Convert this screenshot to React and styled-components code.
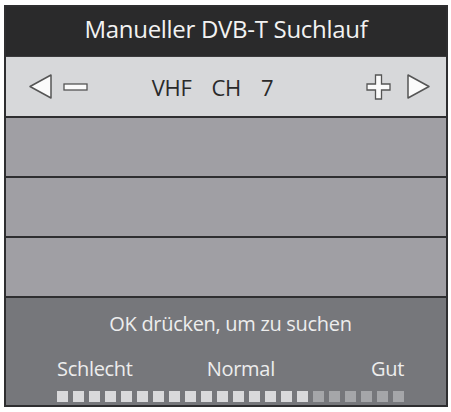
import React from "react";
import styled, { createGlobalStyle } from "styled-components";

const GlobalStyle = createGlobalStyle`
  html, body {
    margin: 0;
    padding: 0;
    background: #ffffff;
  }
  body {
    font-family: "Open Sans", "Noto Sans", sans-serif;
  }
`;

const Page = styled.div`
  width: 451px;
  height: 412px;
  padding: 5px 3px 5px 4px;
  box-sizing: border-box;
`;

const Frame = styled.div`
  display: flex;
  flex-direction: column;
  height: 402px;
  border: 2px solid #2e2e30;
  box-sizing: border-box;
`;

const Header = styled.div`
  height: 50px;
  box-sizing: border-box;
  padding-bottom: 7px;
  background: #2a2a2b;
  color: #f2f2f2;
  display: flex;
  align-items: center;
  justify-content: center;
  font-size: 24px;
  letter-spacing: -0.3px;
  border-bottom: 1px solid #3a3a3c;
`;

const ChannelBar = styled.div`
  height: 59px;
  background: #d7d8da;
  display: flex;
  align-items: center;
  padding: 0 15px 0 22px;
  color: #2a2a2a;
`;

const Side = styled.div`
  display: flex;
  align-items: center;
  gap: ${(p) => p.$gap}px;
  width: 70px;
  justify-content: ${(p) => (p.$right ? "flex-end" : "flex-start")};
`;

const Channel = styled.div`
  flex: 1;
  display: flex;
  justify-content: center;
  gap: 20px;
  font-size: 22px;
  letter-spacing: -0.3px;
  padding-right: 34px;
`;

const Row = styled.div`
  height: 58px;
  background: #a09fa4;
  border-top: 2px solid #2e2e30;
`;

const Footer = styled.div`
  flex: 1;
  background: #76777b;
  border-top: 2px solid #2e2e30;
  color: #ededed;
  display: flex;
  flex-direction: column;
  align-items: center;
  padding: 14px 42px 0 51px;
  font-size: 20px;
  line-height: 24px;
  letter-spacing: -0.3px;
`;

const Hint = styled.div``;

const Scale = styled.div`
  align-self: stretch;
  display: flex;
  justify-content: space-between;
  margin-top: 21px;
`;

const Label = styled.span`
  margin-right: ${(p) => p.$shift || 0}px;
`;

const Meter = styled.div`
  align-self: stretch;
  display: flex;
  gap: 5px;
  margin-top: 10px;
`;

const Cell = styled.div`
  width: 11px;
  height: 11px;
  background: ${(p) => (p.$on ? "#d9d9db" : "#a5a6a9")};
`;

const Arrow = ({ dir }) => (
  <svg width="25" height="27" viewBox="0 0 25 27">
    {dir === "left" ? (
      <polygon points="23,2 23,25 2,13.5" fill="#fbfbfb" stroke="#555" strokeWidth="1.5" strokeLinejoin="round" />
    ) : (
      <polygon points="2,2 2,25 23,13.5" fill="#fbfbfb" stroke="#555" strokeWidth="1.5" strokeLinejoin="round" />
    )}
  </svg>
);

const Minus = () => (
  <svg width="25" height="10" viewBox="0 0 25 10">
    <rect x="1" y="2" width="23" height="6" fill="#fbfbfb" stroke="#555" strokeWidth="1.3" />
  </svg>
);

const Plus = () => (
  <svg width="25" height="26" viewBox="0 0 25 26">
    <path
      d="M9.5 1 H15.5 V10 H24 V16 H15.5 V25 H9.5 V16 H1 V10 H9.5 Z"
      fill="#fbfbfb"
      stroke="#555"
      strokeWidth="1.3"
    />
  </svg>
);

const cells = Array.from({ length: 22 }, (_, i) => i < 16);

export default function App() {
  return (
    <>
      <GlobalStyle />
      <Page>
        <Frame>
          <Header>Manueller DVB-T Suchlauf</Header>
          <ChannelBar>
            <Side $gap={10}>
              <Arrow dir="left" />
              <Minus />
            </Side>
            <Channel>
              <span>VHF</span>
              <span>CH</span>
              <span>7</span>
            </Channel>
            <Side $gap={15} $right>
              <Plus />
              <Arrow dir="right" />
            </Side>
          </ChannelBar>
          <Row />
          <Row />
          <Row />
          <Footer>
            <Hint>OK drücken, um zu suchen</Hint>
            <Scale>
              <Label>Schlecht</Label>
              <Label $shift={22}>Normal</Label>
              <Label>Gut</Label>
            </Scale>
            <Meter>
              {cells.map((on, i) => (
                <Cell key={i} $on={on} />
              ))}
            </Meter>
          </Footer>
        </Frame>
      </Page>
    </>
  );
}
